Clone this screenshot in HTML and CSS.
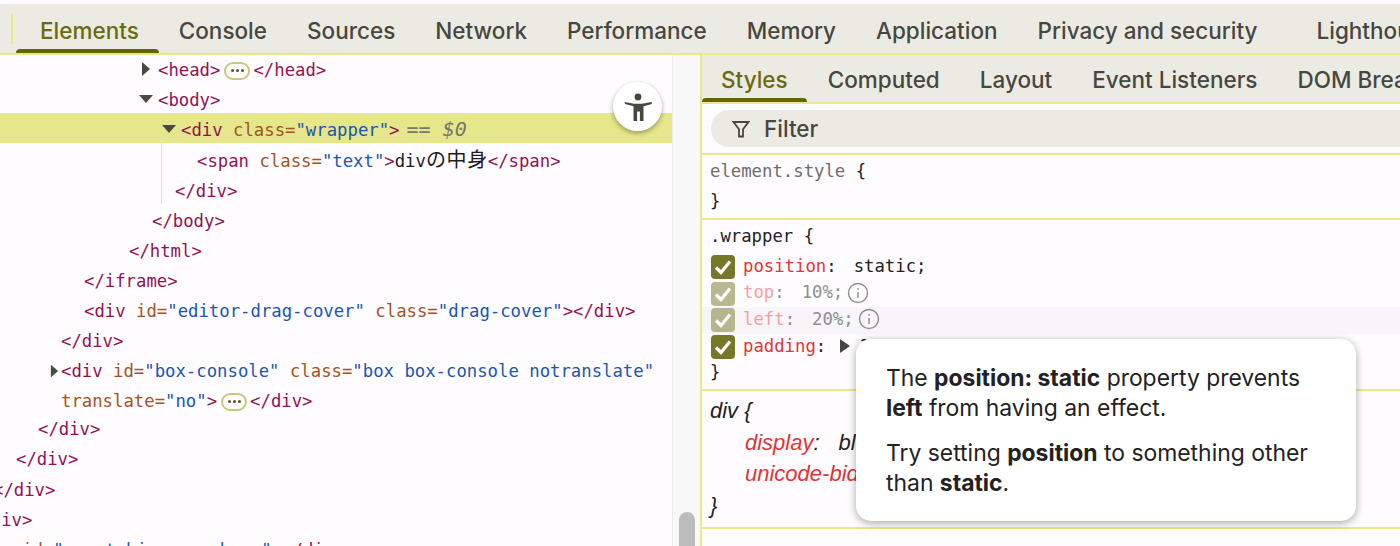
FILE: index.html
```html
<!DOCTYPE html>
<html lang="en">
<head>
<meta charset="utf-8">
<title>DevTools</title>
<link rel="stylesheet" href="styles.css">
</head>
<body>
<div class="app">
  <nav class="main-tabs">
    <span class="divider"></span>
    <span class="tab active">Elements</span>
    <span class="tab">Console</span>
    <span class="tab">Sources</span>
    <span class="tab">Network</span>
    <span class="tab">Performance</span>
    <span class="tab">Memory</span>
    <span class="tab">Application</span>
    <span class="tab">Privacy and security</span>
    <span class="tab tab-far">Lighthouse</span>
  </nav>
  <div class="panes">
    <section class="dom">
      <div class="row i6"><svg class="tri tri-closed" viewBox="0 0 10 16"><path d="M1 1l8 7-8 7z"/></svg><span class="tag">&lt;head&gt;</span><span class="more"><i></i><i></i><i></i></span><span class="tag">&lt;/head&gt;</span></div>
      <div class="row i6"><svg class="tri tri-open" viewBox="0 0 14 10"><path d="M0 1h14L7 9z"/></svg><span class="tag">&lt;body&gt;</span></div>
      <div class="row i7 selected"><svg class="tri tri-open" viewBox="0 0 14 10"><path d="M0 1h14L7 9z"/></svg><span class="tag">&lt;div</span> <span class="attr">class=</span><span class="val">"wrapper"</span><span class="tag">&gt;</span><em class="eq">== $0</em></div>
      <div class="guide">
        <div class="row i8"><span class="tag">&lt;span</span> <span class="attr">class=</span><span class="val">"text"</span><span class="tag">&gt;</span><span class="txt">div<span class="cjk">の中身</span></span><span class="tag">&lt;/span&gt;</span></div>
        <div class="row ic7"><span class="tag">&lt;/div&gt;</span></div>
      </div>
      <div class="row ic6"><span class="tag">&lt;/body&gt;</span></div>
      <div class="row ic5"><span class="tag">&lt;/html&gt;</span></div>
      <div class="row i3"><span class="tag">&lt;/iframe&gt;</span></div>
      <div class="row i3"><span class="tag">&lt;div</span> <span class="attr">id=</span><span class="val">"editor-drag-cover"</span> <span class="attr">class=</span><span class="val">"drag-cover"</span><span class="tag">&gt;&lt;/div&gt;</span></div>
      <div class="row i2"><span class="tag">&lt;/div&gt;</span></div>
      <div class="row i2"><svg class="tri tri-side" viewBox="0 0 10 16"><path d="M1 1l8 7-8 7z"/></svg><span class="tag">&lt;div</span> <span class="attr">id=</span><span class="val">"box-console"</span> <span class="attr">class=</span><span class="val">"box box-console notranslate"</span></div>
      <div class="row i2"><span class="attr">translate=</span><span class="val">"no"</span><span class="tag">&gt;</span><span class="more"><i></i><i></i><i></i></span><span class="tag">&lt;/div&gt;</span></div>
      <div class="row i1 tight"><span class="tag">&lt;/div&gt;</span></div>
      <div class="row i0"><span class="tag">&lt;/div&gt;</span></div>
      <div class="row in1 loose"><span class="tag">&lt;/div&gt;</span></div>
      <div class="row in2"><span class="tag">&lt;/div&gt;</span></div>
      <div class="row in2"><span class="tag">&lt;div</span> <span class="attr">id=</span><span class="val">"rewatching-overbars"</span><span class="tag">&gt;&lt;/div&gt;</span></div>
      <button class="a11y" aria-label="Accessibility tree"><svg viewBox="0 0 30 30" width="30" height="30"><circle cx="15" cy="5" r="3.4"/><path d="M1.500 10l9.500 1.700h8l9.500-1.700.4 1.900-8.400 2.400V29h-3.600v-9.500h-2.800V29h-3.600V14.300l-8.400-2.400z"/></svg></button>
    </section>
    <div class="scrollbar"><span class="thumb"></span></div>
    <section class="side">
      <nav class="sub-tabs">
        <span class="tab active">Styles</span>
        <span class="tab">Computed</span>
        <span class="tab">Layout</span>
        <span class="tab">Event Listeners</span>
        <span class="tab">DOM Breakpoints</span>
      </nav>
      <div class="filter-row">
        <div class="filter"><svg viewBox="0 0 18 18" width="18" height="18"><path d="M1.500 2h15L11 9.200V16.500H7V9.200z"/></svg><span>Filter</span></div>
      </div>
      <div class="rule rule-el">
        <div class="code"><span class="sel-muted">element.style</span> {</div>
        <div class="code">}</div>
      </div>
      <div class="rule rule-wrap">
        <div class="code rule-head">.wrapper {</div>
        <div class="decl">
          <span class="check"><svg viewBox="0 0 24 24"><path d="M5 12.500l5 5 9-11"/></svg></span>
          <span class="code"><span class="prop">position</span>:<span class="value">static;</span></span>
        </div>
        <div class="decl off">
          <span class="check"><svg viewBox="0 0 24 24"><path d="M5 12.500l5 5 9-11"/></svg></span>
          <span class="code"><span class="prop">top</span>:<span class="value">10%;</span></span>
          <svg class="info" viewBox="0 0 22 22"><circle cx="11" cy="11" r="9.500"/><path d="M11 10v6M11 6v1.800"/></svg>
        </div>
        <div class="decl off hover">
          <span class="check"><svg viewBox="0 0 24 24"><path d="M5 12.500l5 5 9-11"/></svg></span>
          <span class="code"><span class="prop">left</span>:<span class="value">20%;</span></span>
          <svg class="info" viewBox="0 0 22 22"><circle cx="11" cy="11" r="9.500"/><path d="M11 10v6M11 6v1.800"/></svg>
        </div>
        <div class="decl decl-last">
          <span class="check"><svg viewBox="0 0 24 24"><path d="M5 12.500l5 5 9-11"/></svg></span>
          <span class="code"><span class="prop">padding</span>:<svg class="tri-v" viewBox="0 0 10 14"><path d="M0 0l10 7-10 7z"/></svg><span class="value-short">100px;</span></span>
        </div>
        <div class="code rule-end">}</div>
      </div>
      <div class="rule rule-ua">
        <div class="ua">div {</div>
        <div class="ua ua-decl"><span class="prop-ua">display</span>:<span class="ua-value">block;</span></div>
        <div class="ua ua-decl"><span class="prop-ua">unicode-bidi</span>:<span class="ua-value">isolate;</span></div>
        <div class="ua">}</div>
      </div>
      <div class="tooltip">
        <p>The <b>position: static</b> property prevents <b>left</b> from having an effect.</p>
        <p>Try setting <b>position</b> to something other than <b>static</b>.</p>
      </div>
    </section>
  </div>
</div>
</body>
</html>
```
FILE: styles.css
```css
* { box-sizing: border-box; }
html, body { margin: 0; height: 100%; overflow: hidden; background: #fffcff; }
.app { width: 1400px; height: 546px; padding-top: 4px; display: flex; flex-direction: column; overflow: hidden; font-family: Inter, "Noto Sans", sans-serif; }

.main-tabs { flex: 0 0 51px; display: flex; align-items: flex-start; gap: 40px; padding-left: 40px; position: relative; background: #ecebe3; border-bottom: 2px solid #e8e88c; white-space: nowrap; overflow: hidden; }
.divider { position: absolute; left: 11px; top: 9px; width: 2px; height: 31px; background: #e8e88c; }
.tab { font-size: 22.500px; font-weight: 500; line-height: 30px; padding-top: 12px; color: #47473f; position: relative; height: 49px; }
.tab.active { color: #6a6a10; }
.main-tabs .tab.active::after { content: ""; position: absolute; left: -24px; right: -20px; bottom: 0; height: 4px; border-radius: 4px 4px 0 0; background: #646400; }
.tab-far { margin-left: 19px; }

.panes { flex: 1; display: flex; min-height: 0; }
.dom { flex: 0 0 672px; position: relative; margin-top: -2px; font: 17.3px/34px "DejaVu Sans Mono", monospace; white-space: nowrap; }
.scrollbar { flex: 0 0 28px; position: relative; background: #f8f8f8; border-left: 1px solid #ededed; }
.thumb { position: absolute; left: 6px; bottom: 0; width: 16px; top: 457px; border-radius: 8px 8px 0 0; background: #bcbcbc; }

.row { height: 30px; line-height: 34px; position: relative; }
.i6 { padding-left: 158px; }
.i7 { padding-left: 181px; }
.i8 { padding-left: 197px; }
.ic7 { padding-left: 175px; }
.ic6 { padding-left: 152px; }
.ic5 { padding-left: 129px; }
.i3 { padding-left: 84px; }
.i2 { padding-left: 61px; }
.i1 { padding-left: 38px; }
.i0 { padding-left: 16px; }
.in1 { margin-left: -7px; }
.in2 { margin-left: -30px; }
.tight { margin-top: -2px; }
.loose { margin-top: 1px; }
.selected { background: #e6e68a; }
.guide { position: relative; padding-top: 1px; }
.guide::before { content: ""; position: absolute; left: 161px; top: 0; bottom: 0; width: 1px; background: #e8e88c; }
.tri { position: absolute; fill: #4a4a40; }
.tri-open { width: 14px; height: 10px; top: 11px; margin-left: -19px; }
.tri-closed { width: 10px; height: 16px; top: 8px; margin-left: -17px; }
.tri-side { width: 9px; height: 16px; top: 9px; margin-left: -11px; }
.tag { color: #921350; }
.attr { color: #a4531f; }
.val { color: #1a57b0; }
.txt { color: #1c1c1c; }
.cjk { font-family: "Noto Sans CJK JP", sans-serif; font-size: 20px; line-height: 0; letter-spacing: .6px; }
.eq { color: #77776a; font-size: 20px; line-height: 0; margin-left: 7px; }
.more { display: inline-flex; align-items: center; justify-content: center; gap: 2px; width: 26px; height: 18px; margin: 0 3px 0 4px; vertical-align: 0; position: relative; top: -4px; border: 2px solid #c8c878; border-radius: 9px; }
.more i { width: 3px; height: 3px; border-radius: 50%; background: #55551c; }
.a11y { position: absolute; left: 613px; top: 29px; width: 49px; height: 49px; padding: 0; border: 0; border-radius: 50%; background: #fff; box-shadow: 0 2px 5px rgba(0,0,0,.35); display: flex; align-items: center; justify-content: center; }
.a11y svg { fill: #47473f; }

.side { flex: 1; min-width: 0; position: relative; border-left: 2px solid #e8e88c; overflow: hidden; }
.sub-tabs { height: 49px; display: flex; gap: 40px; padding-left: 19px; background: #ecebe3; border-bottom: 2px solid #e8e88c; white-space: nowrap; overflow: hidden; }
.sub-tabs .tab { padding-top: 10px; height: 47px; }
.sub-tabs .tab.active::after { content: ""; position: absolute; left: -19px; right: -19px; bottom: 0; height: 4px; border-radius: 4px 4px 0 0; background: #646400; }
.filter-row { height: 51px; padding: 6px 0 0 9px; border-bottom: 2px solid #e8e88c; }
.filter { height: 37px; display: flex; align-items: center; gap: 14px; padding-left: 21px; background: #ecebe3; border-radius: 18px 0 0 18px; font-size: 22.5px; font-weight: 500; color: #47473f; }
.filter svg { fill: none; stroke: #47473f; stroke-width: 1.800; }

.rule { padding-left: 8px; border-bottom: 2px solid #e8e88c; }
.code { font: 17.3px/30px "DejaVu Sans Mono", monospace; color: #222; white-space: pre; }
.rule-el { height: 65px; padding-top: 1px; }
.sel-muted { color: #6d6d6d; }
.rule-wrap { height: 171px; padding-top: 1px; }
.rule-head { height: 33px; }
.rule-end { line-height: 24px; }
.decl { height: 26.500px; margin-left: -8px; padding-left: 9px; display: flex; align-items: center; gap: 8px; }
.decl .code { line-height: 26px; margin-top: -3px; }
.decl-last .code { margin-top: -1px; }
.check { flex: 0 0 24px; height: 24px; border-radius: 4px; background: #77772a; }
.check svg { display: block; fill: none; stroke: #fff; stroke-width: 3.200; }
.value { margin-left: 17px; }
.value-short { margin-left: 9px; }
.off .check { opacity: .5; }
.off .code { color: #8e8e8e; }
.off .prop { color: #f5a0a0; }
.prop { color: #e03535; }
.hover { background: #f7f5f7; }
.info { width: 22px; height: 22px; margin-left: -4px; margin-top: -2px; fill: none; stroke: #8e8e8e; stroke-width: 1.400; }
.tri-v { width: 10px; height: 14px; fill: #47473f; margin-left: 14px; vertical-align: -1px; }
.rule-ua { height: 138px; padding-top: 4px; }
.ua { font: italic 22px/31.500px "Liberation Sans", sans-serif; color: #222; }
.ua-decl { padding-left: 35px; }
.prop-ua { color: #e03535; }
.ua-value { margin-left: 19px; }

.tooltip { position: absolute; left: 154px; top: 284px; width: 500px; height: 182px; padding: 24px 30px; background: #fff; border-radius: 15px; box-shadow: 0 2px 8px rgba(0,0,0,.35); font-size: 22.9px; line-height: 30px; color: #222; }
.tooltip p { margin: 0 0 15px; }
```
